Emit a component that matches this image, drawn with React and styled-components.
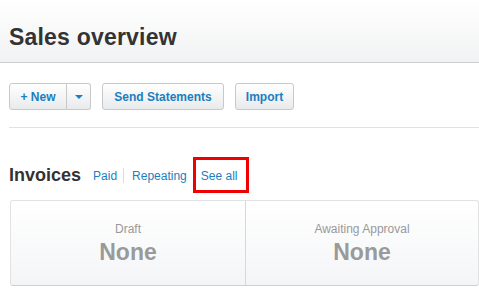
import React from 'react';
import styled, { createGlobalStyle } from 'styled-components';

const GlobalStyle = createGlobalStyle`
  body {
    margin: 0;
    background: #fff;
    font-family: "Liberation Sans", Arial, sans-serif;
    overflow: hidden;
  }
`;

const Header = styled.header`
  height: 63px;
  display: flex;
  align-items: flex-end;
  padding: 0 9px 11px;
  box-sizing: border-box;
  background: linear-gradient(#ffffff, #f1f2f3);
  border-bottom: 1px solid #cfcfcf;
`;

const Title = styled.h1`
  margin: 0;
  font-size: 23px;
  font-weight: bold;
  color: #333;
  letter-spacing: 0.2px;
`;

const Content = styled.div`
  padding: 20px 0 0 9px;
`;

const Toolbar = styled.div`
  display: flex;
  gap: 11px;
  padding-bottom: 17px;
  border-bottom: 1px solid #e1e1e1;
`;

const SplitGroup = styled.div`
  display: flex;
`;

const Button = styled.button`
  height: 27px;
  padding: 0 ${(p) => (p.$pad ?? 8)}px;
  font-family: inherit;
  font-size: 12px;
  font-weight: bold;
  white-space: nowrap;
  color: #1a7fc0;
  background: linear-gradient(#ffffff, #e8eaec);
  border: 1px solid #c8c8c8;
  border-radius: ${(p) => (p.$side === 'left' ? '3px 0 0 3px' : p.$side === 'right' ? '0 3px 3px 0' : '3px')};
  border-left-width: ${(p) => (p.$side === 'right' ? 0 : 1)}px;
  cursor: pointer;
  display: flex;
  align-items: center;
  justify-content: center;
  width: ${(p) => (p.$w ? `${p.$w}px` : 'auto')};
`;

const Caret = styled.span`
  width: 0;
  height: 0;
  border-left: 4px solid transparent;
  border-right: 4px solid transparent;
  border-top: 4px solid #1a7fc0;
`;

const SectionHead = styled.div`
  display: flex;
  align-items: center;
  margin-top: 29px;
  height: 36px;
`;

const SectionTitle = styled.h2`
  margin: 0 12px 0 0;
  font-size: 18px;
  font-weight: bold;
  color: #333;
`;

const Link = styled.a`
  font-size: 12px;
  color: #1a7fc0;
  text-decoration: none;
  padding-right: ${(p) => (p.$sep ? 6 : 0)}px;
  margin-right: ${(p) => (p.$sep ? 8 : 6)}px;
  border-right: ${(p) => (p.$sep ? '1px solid #dcdcdc' : 'none')};
  line-height: 14px;
  padding-top: 1px;
`;

const Highlight = styled.div`
  border: 3px solid #f00000;
  height: 36px;
  box-sizing: border-box;
  display: flex;
  align-items: center;
  padding: 1px 0 0 5px;
  width: 56px;
`;

const Card = styled.div`
  margin: 7px 0 0 1px;
  display: grid;
  grid-template-columns: 234px 1fr;
  height: 86px;
  box-sizing: border-box;
  border: 1px solid #e2e2e2;
  border-bottom-color: #cfcfcf;
  border-radius: 3px;
  background: linear-gradient(#ffffff, #f4f5f7);
`;

const Stat = styled.div`
  display: flex;
  flex-direction: column;
  align-items: center;
  padding-top: 21px;
  border-left: ${(p) => (p.$divided ? '1px solid #d8d8d8' : 'none')};
`;

const StatLabel = styled.div`
  font-size: 12px;
  color: #999;
`;

const StatValue = styled.div`
  font-size: 23px;
  font-weight: bold;
  color: #9a9a9a;
  margin-top: 3px;
`;

const App = () => {
  return (
    <>
      <GlobalStyle />
      <Header>
        <Title>Sales overview</Title>
      </Header>
      <Content>
        <Toolbar>
          <SplitGroup>
            <Button $side="left" $w={58}>+ New</Button>
            <Button $side="right" $w={24} $pad={0}>
              <Caret />
            </Button>
          </SplitGroup>
          <Button $w={122}>Send Statements</Button>
          <Button $w={59}>Import</Button>
        </Toolbar>
        <SectionHead>
          <SectionTitle>Invoices</SectionTitle>
          <Link href="#" $sep>Paid</Link>
          <Link href="#">Repeating</Link>
          <Highlight>
            <Link href="#">See all</Link>
          </Highlight>
        </SectionHead>
        <Card>
          <Stat>
            <StatLabel>Draft</StatLabel>
            <StatValue>None</StatValue>
          </Stat>
          <Stat $divided>
            <StatLabel>Awaiting Approval</StatLabel>
            <StatValue>None</StatValue>
          </Stat>
        </Card>
      </Content>
    </>
  );
};

export default App;
